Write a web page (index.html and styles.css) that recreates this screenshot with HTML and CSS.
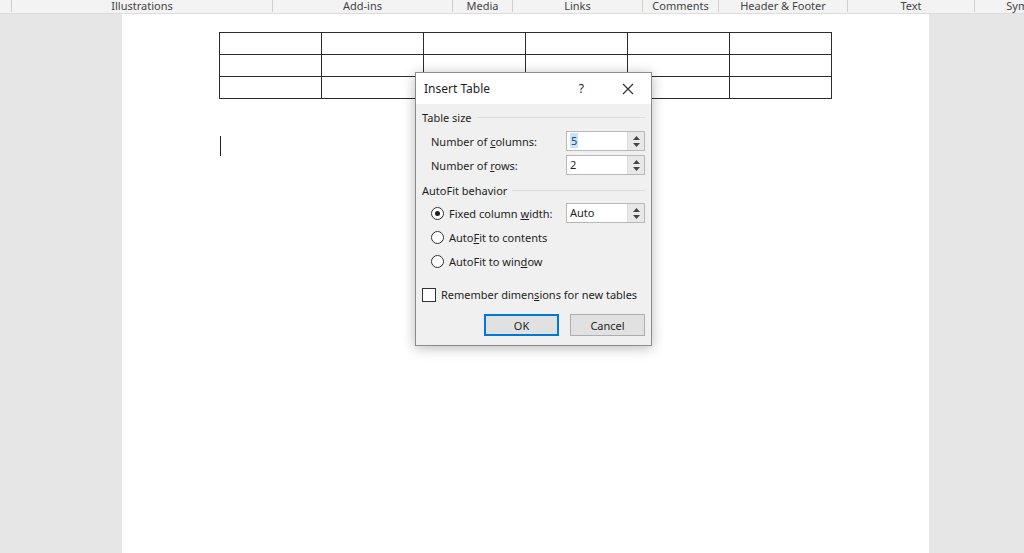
FILE: index.html
```html
<!DOCTYPE html>
<html lang="en">
<head>
    <meta charset="UTF-8">
    <title>Insert Table</title>
    <link rel="stylesheet" href="styles.css">
</head>
<body>
    <div class="ribbon">
        <div class="group" style="width: 12px"></div>
        <div class="group" style="width: 261px">Illustrations</div>
        <div class="group" style="width: 180px">Add-ins</div>
        <div class="group" style="width: 60px">Media</div>
        <div class="group" style="width: 130px">Links</div>
        <div class="group" style="width: 76px">Comments</div>
        <div class="group" style="width: 129px">Header &amp; Footer</div>
        <div class="group" style="width: 127px">Text</div>
        <div class="group last" style="width: 106px">Symbols</div>
    </div>

    <div class="workspace">
        <div class="page">
            <table class="doc-table">
                <tr><td></td><td></td><td></td><td></td><td></td><td></td></tr>
                <tr><td></td><td></td><td></td><td></td><td></td><td></td></tr>
                <tr><td></td><td></td><td></td><td></td><td></td><td></td></tr>
            </table>
            <div class="caret"></div>
        </div>

        <!-- dialog floats over the document -->
        <div class="dialog">
            <div class="dialog-title">
                <span class="title-text">Insert Table</span>
                <span class="title-help">?</span>
                <svg class="title-close" width="12" height="12" viewBox="0 0 12 12">
                    <path d="M1 1 L11 11 M11 1 L1 11" stroke="#333" stroke-width="1.2" fill="none"/>
                </svg>
            </div>
            <div class="dialog-body">
                <div class="section-head"><span>Table size</span></div>
                <div class="field-row">
                    <span class="field-label">Number of <u>c</u>olumns:</span>
                    <div class="spin">
                        <div class="spin-value"><span class="selected">5</span></div>
                        <div class="spin-buttons">
                            <svg width="7" height="4" viewBox="0 0 7 4"><path d="M0 4 L3.5 0 L7 4 Z" fill="#444"/></svg>
                            <svg width="7" height="4" viewBox="0 0 7 4"><path d="M0 0 L3.5 4 L7 0 Z" fill="#444"/></svg>
                        </div>
                    </div>
                </div>
                <div class="field-row">
                    <span class="field-label">Number of <u>r</u>ows:</span>
                    <div class="spin">
                        <div class="spin-value">2</div>
                        <div class="spin-buttons">
                            <svg width="7" height="4" viewBox="0 0 7 4"><path d="M0 4 L3.5 0 L7 4 Z" fill="#444"/></svg>
                            <svg width="7" height="4" viewBox="0 0 7 4"><path d="M0 0 L3.5 4 L7 0 Z" fill="#444"/></svg>
                        </div>
                    </div>
                </div>

                <div class="section-head second"><span>AutoFit behavior</span></div>
                <div class="field-row radio-row">
                    <span class="radio checked"></span>
                    <span class="radio-label">Fixed column <u>w</u>idth:</span>
                    <div class="spin wide">
                        <div class="spin-value">Auto</div>
                        <div class="spin-buttons">
                            <svg width="7" height="4" viewBox="0 0 7 4"><path d="M0 4 L3.5 0 L7 4 Z" fill="#444"/></svg>
                            <svg width="7" height="4" viewBox="0 0 7 4"><path d="M0 0 L3.5 4 L7 0 Z" fill="#444"/></svg>
                        </div>
                    </div>
                </div>
                <div class="field-row radio-row">
                    <span class="radio"></span>
                    <span class="radio-label">Auto<u>F</u>it to contents</span>
                </div>
                <div class="field-row radio-row">
                    <span class="radio"></span>
                    <span class="radio-label">AutoFit to win<u>d</u>ow</span>
                </div>

                <div class="check-row">
                    <span class="checkbox"></span>
                    <span>Remember dimen<u>s</u>ions for new tables</span>
                </div>

                <div class="buttons">
                    <button class="btn default">OK</button>
                    <button class="btn">Cancel</button>
                </div>
            </div>
        </div>
    </div>
</body>
</html>
```

FILE: styles.css
```css
body {
    margin: 0;
    font-family: 'Segoe UI', 'Noto Sans', 'Open Sans', sans-serif;
    background-color: #e6e6e6;
    overflow: hidden;
}

.ribbon {
    display: flex;
    height: 13px;
    background-color: #f3f3f3;
    border-bottom: 1px solid #dcdcdc;
    white-space: nowrap;
}

.group {
    flex: none;
    text-align: center;
    font-size: 11px;
    line-height: 12px;
    color: #444;
    border-right: 1px solid #cfcfcf;
    box-sizing: border-box;
    height: 12px;
}

.group.last {
    border-right: none;
}

.workspace {
    position: relative;
    height: 539px;
}

.page {
    margin-left: 122px;
    width: 807px;
    height: 100%;
    background-color: white;
    padding-top: 18px;
    box-sizing: border-box;
}

.doc-table {
    margin-left: 97px;
    border-collapse: collapse;
}

.doc-table td {
    width: 101px;
    height: 21px;
    padding: 0;
    border: 1px solid #2b2b2b;
}

.caret {
    margin: 37px 0 0 98px;
    width: 1px;
    height: 20px;
    background-color: #222;
}

.dialog {
    position: absolute;
    left: 415px;
    top: 58px;
    width: 237px;
    height: 274px;
    box-sizing: border-box;
    border: 1px solid #8c8c8c;
    background-color: #f0f0f0;
    box-shadow: 0 2px 12px rgba(0,0,0,0.28);
    font-size: 11px;
    color: #1e1e1e;
}

.dialog-title {
    display: flex;
    align-items: center;
    height: 31px;
    background-color: white;
    padding-left: 8px;
}

.title-text {
    font-size: 12px;
    flex: 1;
}

.title-help {
    font-size: 12px;
    margin-right: 38px;
}

.title-close {
    margin-right: 17px;
}

.dialog-body {
    padding: 6px 6px 0 6px;
}

.section-head {
    display: flex;
    align-items: center;
    height: 15px;
    gap: 5px;
    margin-bottom: 4px;
}

.section-head::after {
    content: "";
    flex: 1;
    height: 1px;
    background-color: #dcdcdc;
}

.section-head.second {
    margin-top: 6px;
    margin-bottom: 3px;
}

.field-row {
    display: flex;
    align-items: center;
    height: 24px;
    padding-left: 9px;
}

.field-label {
    flex: 1;
}

.spin {
    display: flex;
    width: 79px;
    height: 20px;
    box-sizing: border-box;
    border: 1px solid #b8b8b8;
    background-color: white;
}

.spin-value {
    flex: 1;
    padding-left: 3px;
    line-height: 18px;
}

.selected {
    background-color: #cce4f7;
    color: #0b4a8c;
    padding: 0 1px;
}

.spin-buttons {
    display: flex;
    flex-direction: column;
    justify-content: center;
    align-items: center;
    gap: 3px;
    width: 16px;
    background-color: #e8e8e8;
    border-left: 1px solid #dcdcdc;
}

.radio-row {
    gap: 5px;
}

.radio-row .radio-label {
    flex: 1;
}

.radio {
    width: 11px;
    height: 11px;
    border: 1px solid #333;
    border-radius: 50%;
    background-color: white;
    position: relative;
}

.radio.checked::after {
    content: "";
    position: absolute;
    left: 3px;
    top: 3px;
    width: 5px;
    height: 5px;
    border-radius: 50%;
    background-color: #1e1e1e;
}

.check-row {
    display: flex;
    align-items: center;
    gap: 5px;
    margin-top: 14px;
}

.checkbox {
    width: 12px;
    height: 12px;
    border: 1px solid #333;
    background-color: white;
}

.buttons {
    display: flex;
    justify-content: flex-end;
    gap: 11px;
    margin-top: 12px;
}

.btn {
    width: 75px;
    height: 22px;
    font-family: inherit;
    font-size: 11px;
    color: #1e1e1e;
    background-color: #e1e1e1;
    border: 1px solid #adadad;
    padding: 0;
}

.btn.default {
    border: 2px solid #0078d7;
}
```
